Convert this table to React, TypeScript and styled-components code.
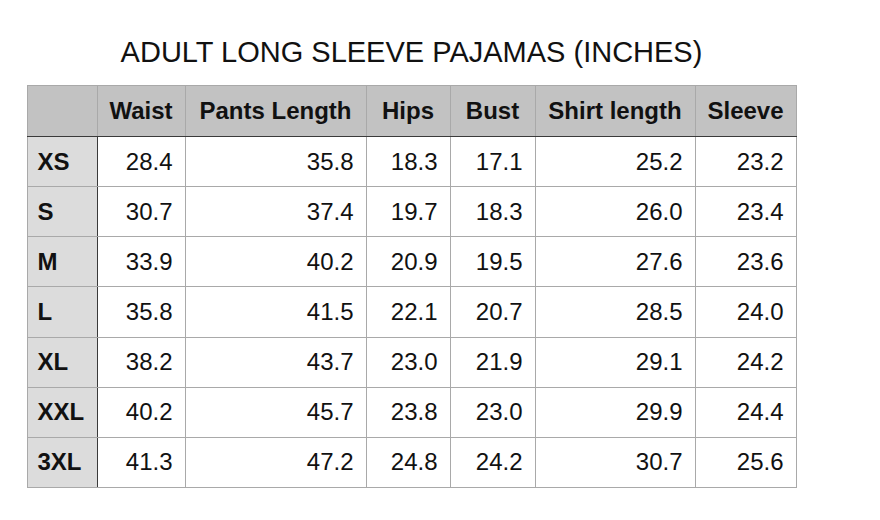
import React from 'react';
import styled, { createGlobalStyle } from 'styled-components';

const GlobalStyle = createGlobalStyle`
  body {
    margin: 0;
    background: #ffffff;
    font-family: "Liberation Sans", Arial, sans-serif;
    color: #111111;
  }
`;

const Page = styled.div`
  width: 880px;
  height: 520px;
  padding: 38px 0 0 27px;
  box-sizing: border-box;
`;

const Sheet = styled.div`
  width: 769px;
  display: flex;
  flex-direction: column;
  align-items: center;
`;

const Title = styled.h1`
  margin: 0 0 18px;
  font-size: 29px;
  line-height: 29px;
  font-weight: 400;
  white-space: nowrap;
`;

const Table = styled.table`
  width: 769px;
  border-collapse: collapse;
  table-layout: fixed;
  border: 1px solid #a9a9a9;
  font-size: 24px;
`;

const HeadCell = styled.th`
  height: 50px;
  padding: 0;
  background: #c2c2c2;
  font-weight: 700;
  text-align: center;
  border: 1px solid #a9a9a9;
  border-bottom: 1px solid #3a3a3a;
  white-space: nowrap;
`;

const SizeCell = styled.th`
  height: 49.15px;
  padding: 0 0 0 10px;
  background: #dcdcdc;
  font-weight: 700;
  text-align: left;
  border: 1px solid #a9a9a9;
  border-right: 1px solid #3a3a3a;
`;

const ValueCell = styled.td`
  padding: 0 12px 0 0;
  text-align: right;
  border: 1px solid #a9a9a9;
`;

const columns = [
  { label: '', width: 70 },
  { label: 'Waist', width: 88 },
  { label: 'Pants Length', width: 181 },
  { label: 'Hips', width: 84 },
  { label: 'Bust', width: 85 },
  { label: 'Shirt length', width: 160 },
  { label: 'Sleeve', width: 101 },
];

const rows: [string, string[]][] = [
  ['XS', ['28.4', '35.8', '18.3', '17.1', '25.2', '23.2']],
  ['S', ['30.7', '37.4', '19.7', '18.3', '26.0', '23.4']],
  ['M', ['33.9', '40.2', '20.9', '19.5', '27.6', '23.6']],
  ['L', ['35.8', '41.5', '22.1', '20.7', '28.5', '24.0']],
  ['XL', ['38.2', '43.7', '23.0', '21.9', '29.1', '24.2']],
  ['XXL', ['40.2', '45.7', '23.8', '23.0', '29.9', '24.4']],
  ['3XL', ['41.3', '47.2', '24.8', '24.2', '30.7', '25.6']],
];

export default function App() {
  return (
    <Page>
      <GlobalStyle />
      <Sheet>
        <Title>ADULT LONG SLEEVE PAJAMAS (INCHES)</Title>
        <Table>
          <colgroup>
            {columns.map((c, i) => (
              <col key={i} style={{ width: c.width }} />
            ))}
          </colgroup>
          <thead>
            <tr>
              {columns.map((c, i) => (
                <HeadCell key={i}>{c.label}</HeadCell>
              ))}
            </tr>
          </thead>
          <tbody>
            {rows.map(([size, values]) => (
              <tr key={size}>
                <SizeCell>{size}</SizeCell>
                {values.map((v, i) => (
                  <ValueCell key={i}>{v}</ValueCell>
                ))}
              </tr>
            ))}
          </tbody>
        </Table>
      </Sheet>
    </Page>
  );
}
